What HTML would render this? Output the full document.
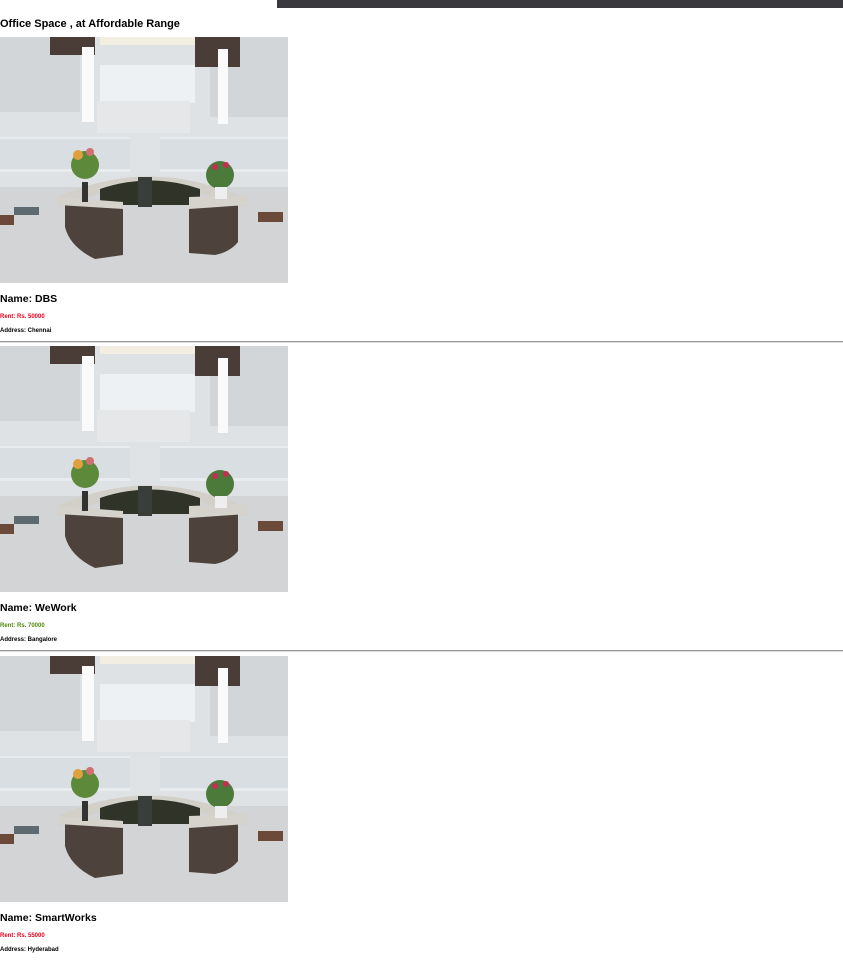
<!DOCTYPE html>
<html><head><meta charset="utf-8">
<style>
body{margin:0;background:#fff;font-family:"Liberation Sans",Arial,sans-serif;width:843px;height:960px;overflow:hidden;position:relative}
.bar{position:absolute;left:277px;top:0;width:566px;height:8px;background:#3a3a3e}
.t{position:absolute;left:0;font-weight:bold;color:#000;white-space:nowrap}
.h1{font-size:11px;top:18px}
.nm{font-size:10.5px}
.sm{font-size:6px}
.img{position:absolute;left:0;width:288px;height:246px}
.hr{position:absolute;left:0;width:843px;height:1px;background:#999;border-bottom:1px solid #ddd}
</style></head><body>
<div class="bar"></div>
<div class="t h1">Office Space , at Affordable Range</div>
<svg width="0" height="0" style="position:absolute">
<defs>
<g id="office">
<rect width="288" height="246" fill="#dfe2e4"/>
<rect x="0" y="150" width="288" height="96" fill="#d2d4d5"/>
<rect x="0" y="0" width="80" height="75" fill="#d3d6d8"/>
<rect x="210" y="0" width="78" height="80" fill="#d3d6d8"/>
<rect x="50" y="0" width="45" height="18" fill="#4a3c36"/>
<rect x="195" y="0" width="45" height="30" fill="#4a3c36"/>
<rect x="100" y="0" width="95" height="8" fill="#f2efe2"/>
<rect x="100" y="28" width="95" height="38" fill="#eef1f3"/>
<rect x="97" y="64" width="93" height="32" fill="#e6e7e8"/>
<rect x="82" y="10" width="12" height="75" fill="#fafafa"/>
<rect x="218" y="12" width="10" height="75" fill="#fafafa"/>
<rect x="0" y="100" width="288" height="35" fill="#e9ecee"/>
<rect x="0" y="102" width="288" height="30" fill="#c7d0d4" opacity=".5"/>
<rect x="130" y="100" width="30" height="35" fill="#dfe3e5"/>
<path d="M58 160 Q150 118 247 162 L247 170 Q190 150 150 150 Q110 150 58 170Z" fill="#d3cfc9"/>
<path d="M100 152 Q150 135 200 152 L200 168 L100 168Z" fill="#2f3328"/>
<rect x="138" y="140" width="14" height="30" fill="#3a3e3a"/>
<path d="M65 168 L123 170 L123 218 L95 222 Q70 210 65 190Z" fill="#4d423c"/>
<path d="M189 166 L238 162 L238 205 Q230 215 215 218 L189 216Z" fill="#4d423c"/>
<path d="M58 160 L123 165 L123 172 L58 168Z" fill="#d6d2cc"/>
<path d="M189 160 L247 158 L247 168 L189 172Z" fill="#d6d2cc"/>
<circle cx="85" cy="128" r="14" fill="#5d8a3a"/>
<circle cx="78" cy="118" r="5" fill="#e0a040"/>
<circle cx="90" cy="115" r="4" fill="#d07070"/>
<rect x="82" y="145" width="6" height="20" fill="#333"/>
<circle cx="220" cy="138" r="14" fill="#4c7a3a"/>
<circle cx="215" cy="130" r="3" fill="#c03050"/><circle cx="226" cy="128" r="3" fill="#c03050"/>
<rect x="215" y="150" width="12" height="12" fill="#eee"/>
<rect x="14" y="170" width="25" height="8" fill="#5d6a70"/>
<rect x="258" y="175" width="25" height="10" fill="#6b4a3a"/>
<rect x="0" y="178" width="14" height="10" fill="#6b4a3a"/>
</g>
</defs></svg>
<svg class="img" style="top:37px" viewBox="0 0 288 246"><use href="#office"/></svg>
<div class="t nm" style="top:293px">Name: DBS</div>
<div class="t sm" style="top:314px;color:#e8001c">Rent: Rs. 50000</div>
<div class="t sm" style="top:328px">Address: Chennai</div>
<div class="hr" style="top:341px"></div>
<svg class="img" style="top:346px" viewBox="0 0 288 246"><use href="#office"/></svg>
<div class="t nm" style="top:602px">Name: WeWork</div>
<div class="t sm" style="top:623px;color:#4f8a10">Rent: Rs. 70000</div>
<div class="t sm" style="top:637px">Address: Bangalore</div>
<div class="hr" style="top:650px"></div>
<svg class="img" style="top:656px" viewBox="0 0 288 246"><use href="#office"/></svg>
<div class="t nm" style="top:912px">Name: SmartWorks</div>
<div class="t sm" style="top:933px;color:#e8001c">Rent: Rs. 55000</div>
<div class="t sm" style="top:947px">Address: Hyderabad</div>
</body></html>
